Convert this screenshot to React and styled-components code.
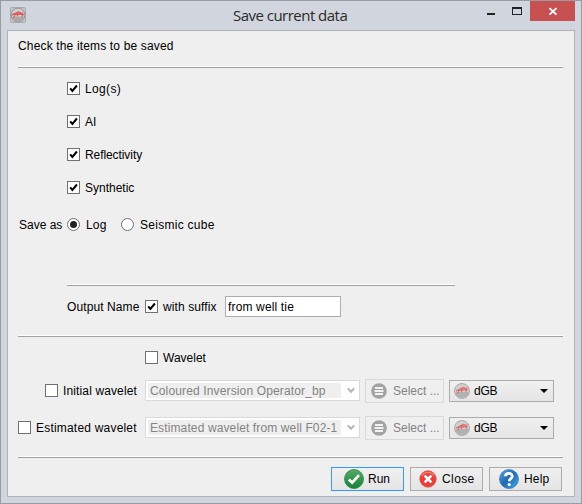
import React from "react";
import styled, { createGlobalStyle } from "styled-components";

const GlobalStyle = createGlobalStyle`
  * { box-sizing: border-box; }
  body { margin: 0; overflow: hidden; }
  button, input { font: inherit; color: inherit; margin: 0; }
`;

const Window = styled.div`
  display: flex;
  flex-direction: column;
  width: 582px;
  height: 504px;
  padding: 0 6px 6px;
  border: 1px solid #9a9ca4;
  background: #d1d5dd;
  color: #000;
  font: 12px/13px "Liberation Sans", Arial, sans-serif;
`;

const TitleBar = styled.header`
  display: flex;
  flex: none;
  height: 29px;
`;

const TitleIcon = styled.span`
  flex: none;
  width: 16px;
  height: 16px;
  margin: 6px 0 0 3px;
`;

const Title = styled.h1`
  flex: 1;
  margin: 4px 0 0 207px;
  font: 400 15px/20px "Open Sans", "Noto Sans", sans-serif;
  letter-spacing: -0.52px;
  white-space: nowrap;
  color: #2b2b2b;
`;

const WindowButton = styled.button`
  display: flex;
  width: ${(p) => p.$w}px;
  height: 20px;
  padding: 0;
  border: 0;
  background: ${(p) => (p.$close ? "#c75050" : "transparent")};
`;

const Panel = styled.main`
  display: flex;
  flex-direction: column;
  height: 467px;
  padding: 0 10px;
  border: 1px solid #b0b3b8;
  background: #efefef;
`;

const Rule = styled.div`
  flex: none;
  width: ${(p) => p.$w || 545}px;
  height: 2px;
  margin: ${(p) => p.$top || 0}px 0 0 ${(p) => p.$left || 0}px;
  background: #a0a0a0;
  border-top: 1px solid #fff;
`;

const Row = styled.div`
  display: flex;
  flex: none;
  align-items: center;
  height: ${(p) => p.$h || 24}px;
  margin-top: ${(p) => p.$top || 0}px;
  padding-left: ${(p) => p.$left || 0}px;
`;

const Text = styled.span`
  flex: none;
  width: ${(p) => (p.$w ? `${p.$w}px` : "auto")};
  padding-top: 1px;
  letter-spacing: ${(p) => p.$ls || 0}px;
  white-space: pre;
`;

const Option = styled.label`
  display: flex;
  flex: none;
  align-items: center;
  gap: ${(p) => p.$gap || 5}px;
  width: ${(p) => (p.$w ? `${p.$w}px` : "auto")};
  height: 13px;
  margin-bottom: ${(p) => p.$lift || 0}px;
`;

const Box = styled.span`
  display: block;
  flex: none;
  width: 13px;
  height: 13px;
  border: 1px solid #707070;
  background: #fff;
  svg { display: block; }
`;

const Radio = styled.span`
  display: flex;
  flex: none;
  align-items: center;
  justify-content: center;
  width: 13px;
  height: 13px;
  border: 1px solid #707070;
  border-radius: 50%;
  background: #fff;
`;

const Dot = styled.span`
  width: 7px;
  height: 7px;
  border-radius: 50%;
  background: #222;
`;

const SuffixInput = styled.input`
  width: 116px;
  height: 21px;
  padding: 0 2px;
  border: 1px solid #abadb3;
  outline: 0;
  background: #fff;
  letter-spacing: 0.15px;
`;

const Combo = styled.div`
  display: flex;
  flex: none;
  align-items: center;
  width: 215px;
  height: 21px;
  margin-bottom: 1px;
  padding: 0 4px 0 2px;
  border: 1px solid #d9d9d9;
  background: #fff;
  color: #838383;
`;

const ComboValue = styled.span`
  flex: none;
  width: 193px;
  height: 15px;
  margin-right: 6px;
  padding-left: 2px;
  background: #efefef;
  line-height: 17px;
  letter-spacing: ${(p) => p.$ls || 0}px;
  white-space: nowrap;
`;

const SelectButton = styled.button`
  display: flex;
  flex: none;
  align-items: center;
  gap: 6px;
  width: 79px;
  height: 24px;
  margin: 0 5px 0 5px;
  padding: 0 0 0 5px;
  border: 1px solid #d9d9d9;
  background: #efefef;
  color: #838383;
`;

const OwnerSelect = styled.button`
  display: flex;
  flex: none;
  align-items: center;
  width: 105px;
  height: 22px;
  padding: 0 5px 0 4px;
  border: 1px solid #acacac;
  background: linear-gradient(#f0f0f0, #e5e5e5);
  gap: 4px;
  svg:last-child { margin-left: auto; }
`;

const Footer = styled.footer`
  display: flex;
  flex: none;
  justify-content: flex-end;
  gap: 6px;
  width: 544px;
  margin-top: 9px;
`;

const ActionButton = styled.button`
  display: flex;
  align-items: center;
  gap: ${(p) => p.$gap || 4}px;
  width: 73px;
  height: 24px;
  padding: 0 0 0 ${(p) => p.$pad}px;
  border: 1px solid ${(p) => (p.$primary ? "#3399ff" : "#acacac")};
  background: linear-gradient(#f0f0f0, #e5e5e5);
`;

function Check({ on }) {
  return (
    <Box>
      {on && (
        <svg width="11" height="11" viewBox="0 0 11 11">
          <path d="M2.2 5.4 4.4 8 8.9 2.5" fill="none" stroke="#000" strokeWidth="2" />
        </svg>
      )}
    </Box>
  );
}

function Logo() {
  return (
    <svg width="16" height="16" viewBox="0 0 16 16">
      <rect x="0.5" y="0.5" width="15" height="15" rx="1" fill="#c3c4c6" stroke="#a9abae" />
      <circle cx="8" cy="8" r="6.9" fill="#d0d1d2" stroke="#939393" strokeWidth="1" />
      <path d="M1.8 10C5 9.2 11 9.2 14.2 10 13.2 13 11 14.4 8 14.4S2.8 13 1.8 10Z" fill="#a9a9aa" />
      <path d="M2 8 3.2 6.2 5.6 5.6 8 4 10.4 5 12.8 5.6 14 8 11.5 7.4 8 7.6 5 7.6Z" fill="#e2696b" />
      <path d="M1.8 8.2 5 7 8 7.4 11 6.8 14 8M5 7.6 4.6 9.5 3 10.4M7.6 7 7.2 9.2M11.7 7 12.4 10" fill="none" stroke="#e14a4d" strokeWidth="1" />
    </svg>
  );
}

function OwnerIcon() {
  return (
    <svg width="16" height="16" viewBox="0 0 16 16">
      <circle cx="8" cy="8" r="7.5" fill="#d0d0d1" stroke="#a2a2a2" strokeWidth="0.9" />
      <path d="M1.3 9.6C5 8.9 11 8.9 14.7 9.6 14 13 11.3 14.8 8 14.8S2 13 1.3 9.6Z" fill="#b0b1b3" />
      <path d="M2 8 4.2 6 6.8 5.6 9.2 4.2 11 5.4 13.2 5.6 13.6 7.4 11 7.2 8.5 7.6 5.5 7.4Z" fill="#dc8a8d" />
      <path d="M2 8.2 5 6.8 8 7.2 10.5 6.2 13.4 7M5 7 4.8 9.2 2.8 10.4M8 7 7.4 9.2M11.8 6.6 12 8.4 13.2 9.6M6 5.8 9.4 4.2 11.2 5.2 13.6 4.8" fill="none" stroke="#dd5a5f" strokeWidth="0.9" />
    </svg>
  );
}

function ListIcon() {
  return (
    <svg width="16" height="16" viewBox="0 0 16 16">
      <circle cx="8" cy="8" r="7.8" fill="#a3a3a3" />
      <path d="M4 4h8v2H4zM3.5 7h9v2h-9zM4 10h8v2H4z" fill="#f2f2f2" />
    </svg>
  );
}

function RunIcon() {
  return (
    <svg width="20" height="20" viewBox="0 0 20 20">
      <defs>
        <linearGradient id="runFill" x2="0" y2="1">
          <stop stopColor="#55aa68" />
          <stop offset="1" stopColor="#188038" />
        </linearGradient>
      </defs>
      <circle cx="10" cy="10" r="9.5" fill="url(#runFill)" stroke="#2a8a42" strokeWidth="0.8" />
      <path d="M4.8 10.4 8.2 13.6 15 6.2" fill="none" stroke="#fff" strokeWidth="2.7" />
    </svg>
  );
}

function CloseIcon() {
  return (
    <svg width="18" height="18" viewBox="0 0 18 18">
      <circle cx="9" cy="9" r="8.2" fill="#e9403c" stroke="#d9534d" strokeWidth="0.8" />
      <path d="M3 5.8A7 7 0 0 1 15 5.8" fill="none" stroke="#f2807b" strokeWidth="1.3" />
      <path d="m5.7 5.7 6.6 6.6m0-6.6-6.6 6.6" stroke="#fff" strokeWidth="2.6" />
    </svg>
  );
}

function HelpIcon() {
  return (
    <svg width="20" height="20" viewBox="0 0 20 20">
      <defs>
        <linearGradient id="helpFill" x2="1" y2="1">
          <stop stopColor="#5aa3da" />
          <stop offset="0.5" stopColor="#1f68b3" />
          <stop offset="1" stopColor="#48b4e6" />
        </linearGradient>
      </defs>
      <circle cx="10" cy="10" r="9.5" fill="url(#helpFill)" stroke="#3c7fb9" strokeWidth="0.8" />
      <path d="M6.4 7.2C6.6 3.5 13.3 3.4 13.3 7.2 13.3 9.4 10.2 9.4 10.2 12.3" fill="none" stroke="#fff" strokeWidth="2.7" />
      <circle cx="10.2" cy="15.5" r="1.6" fill="#fff" />
    </svg>
  );
}

const items = [
  { label: "Log(s)", ls: 0.35 },
  { label: "AI", ls: 0 },
  { label: "Reflectivity", ls: -0.08 },
  { label: "Synthetic", ls: 0 },
];

const wavelets = [
  { label: "Initial wavelet", value: "Coloured Inversion Operator_bp", left: 27, ls: 0.13, vls: 0.14 },
  { label: "Estimated wavelet", value: "Estimated wavelet from well F02-1", left: 0, ls: 0.2, vls: 0.12 },
];

export default function App() {
  return (
    <>
      <GlobalStyle />
      <Window>
        <TitleBar>
          <TitleIcon><Logo /></TitleIcon>
          <Title>Save current data</Title>
          <WindowButton $w={28} aria-label="Minimize">
            <svg width="28" height="20"><path d="M5 12h8v2H5z" fill="#222" /></svg>
          </WindowButton>
          <WindowButton $w={20} aria-label="Maximize">
            <svg width="20" height="20"><path fillRule="evenodd" d="M2 6h10v8H2zM3 8v5h8V8z" fill="#222" /></svg>
          </WindowButton>
          <WindowButton $w={45} $close aria-label="Close window">
            <svg width="45" height="20"><path d="m19.5 7.2 7 6.5m0-6.5-7 6.5" stroke="#fff" strokeWidth="1.8" /></svg>
          </WindowButton>
        </TitleBar>
        <Panel>
          <Row $h={20} $top={5}><Text $ls={0.155}>Check the items to be saved</Text></Row>
          <Rule $top={10} />
          {items.map((item, i) => (
            <Row key={item.label} $h={13} $top={i ? 20 : 14} $left={49}>
              <Option><Check on /><Text $ls={item.ls}>{item.label}</Text></Option>
            </Row>
          ))}
          <Row $h={13} $top={24} $left={1}>
            <Text $w={48}>Save as</Text>
            <Option $w={54} $gap={6}><Radio><Dot /></Radio><Text $ls={0.2}>Log</Text></Option>
            <Option $gap={6}><Radio /><Text $ls={0.28}>Seismic cube</Text></Option>
          </Row>
          <Rule $top={53} $left={49} $w={388} />
          <Row $h={21} $top={10} $left={49}>
            <Text $w={78} $ls={0.1}>Output Name</Text>
            <Option $w={80}><Check on /><Text $ls={0.1}>with suffix</Text></Option>
            <SuffixInput defaultValue="from well tie" aria-label="Suffix" />
          </Row>
          <Rule $top={18} />
          <Row $h={13} $top={14} $left={127}>
            <Option><Check /><Text>Wavelet</Text></Option>
          </Row>
          {wavelets.map((w, i) => (
            <Row key={w.label} $h={24} $top={i ? 13 : 15} $left={w.left}>
              <Option $w={127 - w.left} $lift={1}><Check /><Text $ls={w.ls}>{w.label}</Text></Option>
              <Combo>
                <ComboValue $ls={w.vls}>{w.value}</ComboValue>
                <svg width="8" height="7" viewBox="0 0 8 7"><path d="M.8 1.4 4 4.8 7.2 1.4" fill="none" stroke="#b5b5b5" strokeWidth="2" /></svg>
              </Combo>
              <SelectButton disabled><ListIcon /><Text>Select ...</Text></SelectButton>
              <OwnerSelect>
                <OwnerIcon />
                <Text $ls={-0.2}>dGB</Text>
                <svg width="8" height="4"><path d="M0 0h8L4 4z" fill="#000" /></svg>
              </OwnerSelect>
            </Row>
          ))}
          <Rule $top={16} />
          <Footer>
            <ActionButton $primary $pad={12}><RunIcon /><Text>Run</Text></ActionButton>
            <ActionButton $pad={8} $gap={5}><CloseIcon /><Text $ls={0.4}>Close</Text></ActionButton>
            <ActionButton $pad={9} $gap={5}><HelpIcon /><Text $ls={0.2}>Help</Text></ActionButton>
          </Footer>
        </Panel>
      </Window>
    </>
  );
}
